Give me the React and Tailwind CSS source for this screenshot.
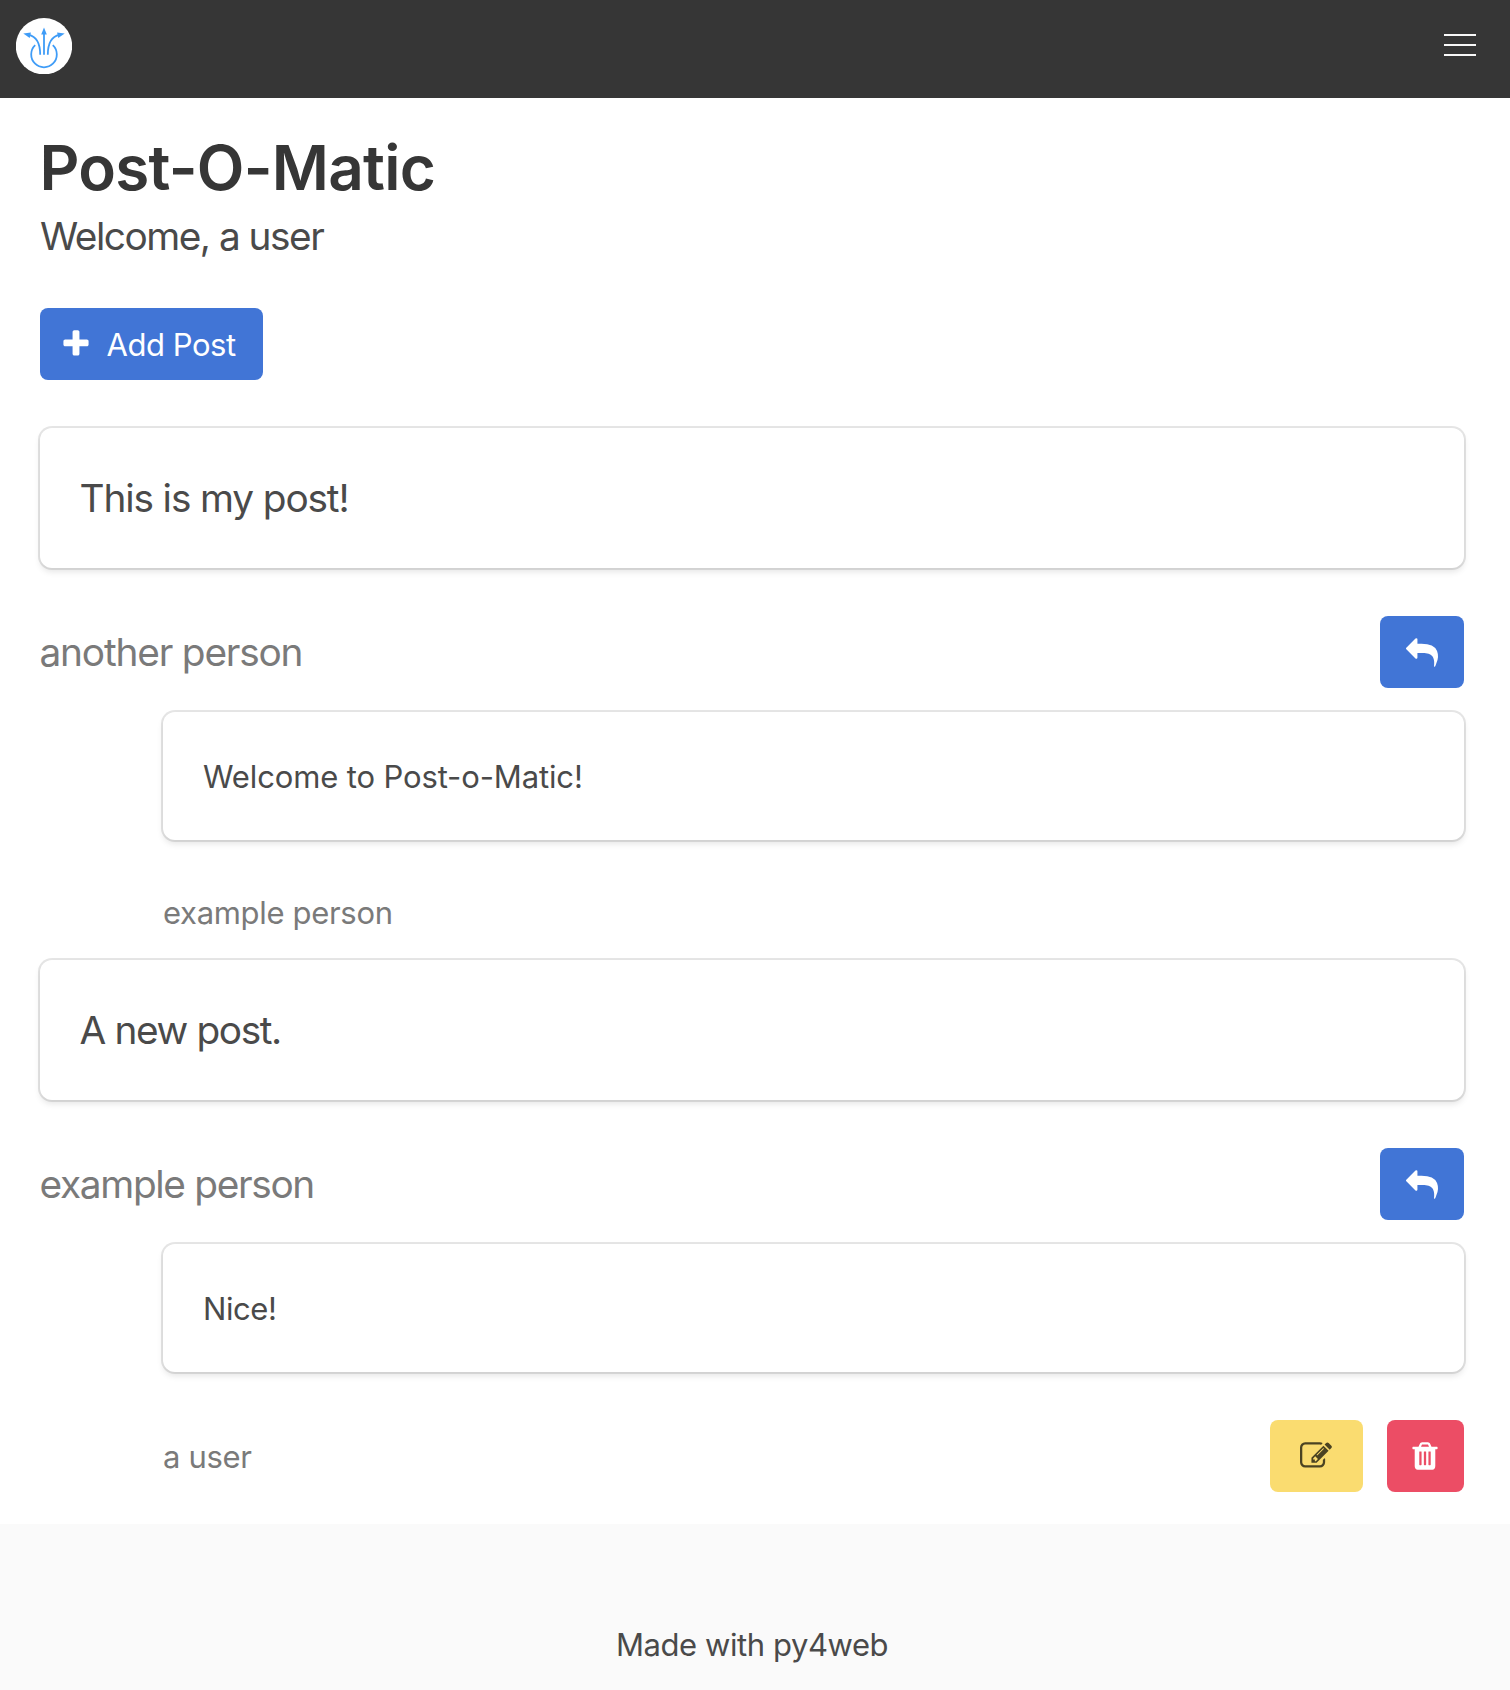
const ICONS = {
  plus: "M1600 736v192q0 40-28 68t-68 28h-416v416q0 40-28 68t-68 28h-192q-40 0-68-28t-28-68v-416h-416q-40 0-68-28t-28-68v-192q0-40 28-68t68-28h416v-416q0-40 28-68t68-28h192q40 0 68 28t28 68v416h416q40 0 68 28t28 68z",
  reply:
    "M1792 1120q0 166-127 451-3 7-10.5 24t-13.5 30-13 22q-12 17-28 17-15 0-23.5-10t-8.5-25q0-9 2.5-26.5t2.5-23.5q5-68 5-123 0-101-17.5-181t-48.5-138.5-80-101-105.5-69.5-133-42.5-154-21.5-175.5-6h-224v256q0 26-19 45t-45 19-45-19l-512-512q-19-19-19-45t19-45l512-512q19-19 45-19t45 19 19 45v256h224q713 0 875 403 53 134 53 333z",
  edit: "M888 1184l116-116-152-152-116 116v56h96v96h56zm440-720q-16-16-33 1l-350 350q-17 17-1 33t33-1l350-350q17-17 1-33zm80 594v190q0 119-84.5 203.5t-203.5 84.5h-832q-119 0-203.5-84.5t-84.5-203.5v-832q0-119 84.5-203.5t203.5-84.5h832q63 0 117 25 15 7 18 23 3 17-9 29l-49 49q-14 14-32 8-23-6-45-6h-832q-66 0-113 47t-47 113v832q0 66 47 113t113 47h832q66 0 113-47t47-113v-126q0-13 9-22l64-64q15-15 35-7t20 29zm-96-738l288 288-672 672h-288v-288zm444 132l-92 92-288-288 92-92q28-28 68-28t68 28l152 152q28 28 28 68t-28 68z",
  trash:
    "M704 1376v-704q0-14-9-23t-23-9h-64q-14 0-23 9t-9 23v704q0 14 9 23t23 9h64q14 0 23-9t9-23zm256 0v-704q0-14-9-23t-23-9h-64q-14 0-23 9t-9 23v704q0 14 9 23t23 9h64q14 0 23-9t9-23zm256 0v-704q0-14-9-23t-23-9h-64q-14 0-23 9t-9 23v704q0 14 9 23t23 9h64q14 0 23-9t9-23zm-544-992h448l-48-117q-7-9-17-11h-317q-10 2-17 11zm928 32v64q0 14-9 23t-23 9h-96v948q0 83-47 143.5t-113 60.5h-832q-66 0-113-58.5t-47-141.5v-952h-96q-14 0-23-9t-9-23v-64q0-14 9-23t23-9h309l70-167q15-37 54-63t79-26h320q40 0 79 26t54 63l70 167h309q14 0 23 9t9 23z",
};

function Icon({ name }) {
  return (
    <svg viewBox="0 0 1792 1792" className="size-8 shrink-0" fill="currentColor" aria-hidden="true">
      <path d={ICONS[name]} />
    </svg>
  );
}

function Logo() {
  return (
    <svg viewBox="0 0 56 56" className="size-14" aria-hidden="true">
      <circle cx="28" cy="28.2" r="28.2" fill="#fff" />
      <g fill="none" stroke="#3f9cf7" strokeWidth="1.8">
        <path d="M28 36.800V15" />
        <path d="M24.200 36.800C24.200 26 20.500 18.300 12.500 16.800" />
        <path d="M31.800 36.800C31.800 26 35.500 18.300 43.500 16.800" />
        <path d="M19.200 27.200A12.800 12.800 0 1 0 36.800 27.200" />
      </g>
      <g fill="#3f9cf7">
        <path d="M28 9.600l2.800 7h-5.600z" />
        <path d="M7.300 15.600l7.600-1-1.200 5.400z" />
        <path d="M48.700 15.600l-7.600-1 1.200 5.400z" />
      </g>
    </svg>
  );
}

function Navbar() {
  return (
    <header className="flex h-[98px] items-start justify-between bg-[#363636] pt-[18px] pr-[34px] pl-4">
      <a href="#home" aria-label="Home">
        <Logo />
      </a>
      <button type="button" aria-label="Menu" className="mt-4 flex w-8 flex-col gap-2">
        <span className="h-0.5 w-full bg-[#f8f8f8]" />
        <span className="h-0.5 w-full bg-[#f8f8f8]" />
        <span className="h-0.5 w-full bg-[#f8f8f8]" />
      </button>
    </header>
  );
}

function Card({ children }) {
  return (
    <div className="flex items-center rounded-xl bg-white px-10 text-[#4a4a4a] shadow-[0_4px_6px_rgba(10,10,10,0.1),0_0_0_2px_rgba(10,10,10,0.1)]">
      {children}
    </div>
  );
}

function ReplyButton() {
  return (
    <button type="button" aria-label="Reply" className="flex h-18 w-21 items-center justify-center rounded-lg bg-[#4175d6] pt-0.5 text-white">
      <Icon name="reply" />
    </button>
  );
}

function Post({ text, textSpacing, author, authorSpacing }) {
  return (
    <article className="mb-6">
      <Card>
        <p className={`-ml-[0.5px] py-10 text-[38.8px] leading-[60px] ${textSpacing}`}>{text}</p>
      </Card>
      <div className="mt-12 flex h-18 items-center justify-between">
        <span className={`-ml-[0.5px] text-[38.8px] text-[#7a7a7a] ${authorSpacing}`}>{author}</span>
        <ReplyButton />
      </div>
    </article>
  );
}

function Comment({ text, textSpacing, author, authorSpacing, children }) {
  return (
    <article className="mb-6 ml-[123px]">
      <Card>
        <p className={`pt-[41px] pb-[39px] text-[31px] leading-[48px] ${textSpacing}`}>{text}</p>
      </Card>
      <div className="mt-12 flex min-h-12 items-center justify-between">
        <span className={`pt-0.5 text-[31px] leading-[46px] text-[#7a7a7a] ${authorSpacing}`}>{author}</span>
        {children}
      </div>
    </article>
  );
}

export default function App() {
  return (
    <div className="min-h-[1690px] bg-white font-['Inter',sans-serif]">
      <Navbar />
      <main className="pt-[38px] pr-[46px] pb-2 pl-10">
        <h1 className="-ml-[0.5px] text-[62px] leading-[64px] font-semibold tracking-[-0.75px] text-[#363636]">Post-O-Matic</h1>
        <p className="mt-3 mb-12 text-[38.8px] leading-[48px] tracking-[-1.5px] text-[#4a4a4a]">Welcome, a user</p>
        <button type="button" className="mb-12 flex h-18 w-[223px] items-center gap-[15px] rounded-lg bg-[#4175d6] pl-[19.5px] text-white">
          <Icon name="plus" />
          <span className="pt-0.5 text-[31px] tracking-[-0.45px] whitespace-nowrap">Add Post</span>
        </button>

        <Post text="This is my post!" textSpacing="tracking-[-1.13px]" author="another person" authorSpacing="tracking-[-1.18px]" />
        <Comment
          text="Welcome to Post-o-Matic!"
          textSpacing="tracking-[-0.13px]"
          author="example person"
          authorSpacing="tracking-[-0.32px]"
        />

        <Post text="A new post." textSpacing="tracking-[-1.38px]" author="example person" authorSpacing="tracking-[-1.33px]" />
        <Comment text="Nice!" textSpacing="tracking-[-0.41px]" author="a user" authorSpacing="tracking-[-0.32px]">
          <div className="flex gap-6">
            <button type="button" aria-label="Edit" className="flex h-18 w-[93px] items-center justify-center rounded-lg bg-[#fadc70] pr-px text-[#4b4322]">
              <Icon name="edit" />
            </button>
            <button type="button" aria-label="Delete" className="flex h-18 w-[77px] items-center justify-center rounded-lg bg-[#ec4d65] pr-px text-white">
              <Icon name="trash" />
            </button>
          </div>
        </Comment>
      </main>
      <footer className="h-[166px] bg-[#fafafa] pt-[97px] pr-[6px] text-center">
        <p className="text-[31px] leading-[48px] tracking-[-0.42px] text-[#4a4a4a]">Made with py4web</p>
      </footer>
    </div>
  );
}
